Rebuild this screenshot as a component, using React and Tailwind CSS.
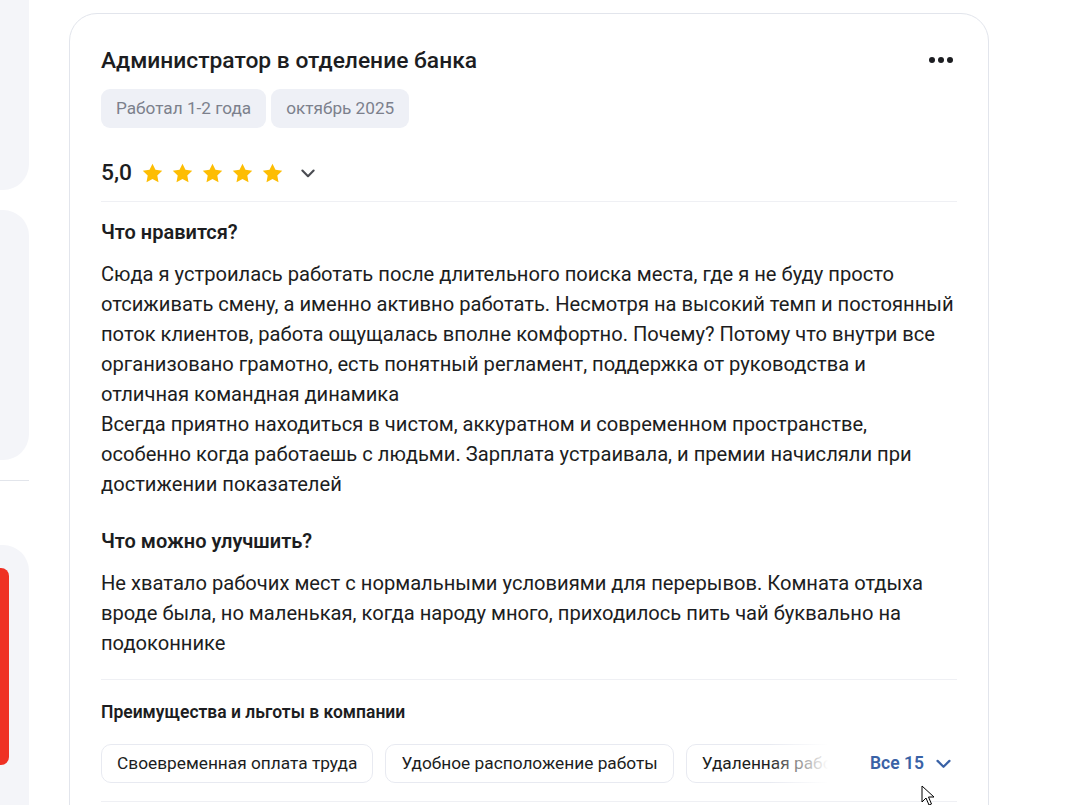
import React from 'react'

const FONT = { fontFamily: 'Roboto, "Noto Sans", sans-serif' }

function Star() {
  return (
    <svg width="21" height="20" viewBox="0 0 24 23" className="shrink-0">
      <path
        d="M12 0.8l3.4 7.1 7.8 1-5.7 5.4 1.4 7.7L12 18.3l-6.9 3.7 1.4-7.7L0.8 8.9l7.8-1z"
        fill="#fdbd03"
      />
    </svg>
  )
}

function Chevron({ color = '#4a4c52', size = 18 }) {
  return (
    <svg width={size} height={size} viewBox="0 0 16 16" fill="none">
      <path d="M3 5.8l5 5 5-5" stroke={color} strokeWidth="1.9" strokeLinecap="round" strokeLinejoin="round" />
    </svg>
  )
}

const benefits = ['Своевременная оплата труда', 'Удобное расположение работы', 'Удаленная работа']

export default function App() {
  return (
    <div className="relative flex h-[805px] w-[1076px] overflow-hidden bg-white text-[#1c1d21]" style={FONT}>
      {/* left column */}
      <div className="flex w-[29px] shrink-0 flex-col">
        <div className="h-[190px] rounded-br-[26px] bg-[#f4f5f9]" />
        <div className="mt-[20px] h-[250px] rounded-r-[26px] bg-[#f4f5f9]" />
        <div className="mt-[20px] h-px bg-[#e2e5eb]" />
        <div className="mt-[64px] flex-1 rounded-tr-[26px] bg-[#f4f5f9] pt-[23px]">
          <div className="h-[197px] w-[9px] rounded-r-[8px] bg-[#ef3124]" />
        </div>
      </div>

      {/* review card */}
      <div className="ml-[40px] mt-[13px] w-[920px] shrink-0 self-start rounded-[28px] border border-[#e2e5ec] px-[31px] pt-[33px]">
        <div className="flex items-start justify-between">
          <h2 className="text-[22.8px] font-medium leading-7">Администратор в отделение банка</h2>
          <div className="mr-[4px] mt-[10px] flex gap-[3px]">
            <span className="h-[6px] w-[6px] rounded-full bg-[#1c1d21]" />
            <span className="h-[6px] w-[6px] rounded-full bg-[#1c1d21]" />
            <span className="h-[6px] w-[6px] rounded-full bg-[#1c1d21]" />
          </div>
        </div>

        <div className="mt-[14px] flex gap-[5px]">
          <span className="flex h-[39px] items-center rounded-[9px] bg-[#eef0f6] px-[15px] text-[17.2px] text-[#7c808c]">Работал 1-2 года</span>
          <span className="flex h-[39px] items-center rounded-[9px] bg-[#eef0f6] px-[15px] text-[17.2px] text-[#7c808c]">октябрь 2025</span>
        </div>

        <div className="mt-[31px] flex items-center">
          <span className="text-[22.8px] font-medium leading-7">5,0</span>
          <div className="ml-[10px] flex gap-[9px]">
            <Star />
            <Star />
            <Star />
            <Star />
            <Star />
          </div>
          <span className="ml-[16px]">
            <Chevron />
          </span>
        </div>

        <div className="mt-[14px] h-px bg-[#eff0f4]" />

        <h3 className="mt-[16px] text-[20px] font-semibold leading-7">Что нравится?</h3>
        <p className="mt-[13px] text-[20.15px] leading-[30px]">
          Сюда я устроилась работать после длительного поиска места, где я не буду просто отсиживать смену, а именно активно работать. Несмотря на высокий темп и постоянный поток клиентов, работа ощущалась вполне комфортно. Почему? Потому что внутри все организовано грамотно, есть понятный регламент, поддержка от руководства и отличная командная динамика
          <br />
          Всегда приятно находиться в чистом, аккуратном и современном пространстве, особенно когда работаешь с людьми. Зарплата устраивала, и премии начисляли при достижении показателей
        </p>

        <h3 className="mt-[28px] text-[20px] font-semibold leading-7">Что можно улучшить?</h3>
        <p className="mt-[13px] text-[20.15px] leading-[30px]">
          Не хватало рабочих мест с нормальными условиями для перерывов. Комната отдыха вроде была, но маленькая, когда народу много, приходилось пить чай буквально на подоконнике
        </p>

        <div className="mt-[21px] h-px bg-[#eff0f4]" />

        <h4 className="mt-[20px] text-[17.5px] font-semibold leading-6">Преимущества и льготы в компании</h4>

        <div className="mt-[20px] flex items-center">
          <div className="relative flex flex-1 gap-[12px] overflow-hidden">
            {benefits.map(b => (
              <span
                key={b}
                className="flex h-[39px] shrink-0 items-center whitespace-nowrap rounded-[10px] border border-[#e8eaf1] px-[15px] text-[17.3px]"
              >
                {b}
              </span>
            ))}
            <div className="absolute inset-y-0 right-0 w-[60px] bg-gradient-to-r from-white/0 to-white" />
          </div>
          <button className="ml-[42px] mr-[4px] flex items-center gap-[10px] text-[17.5px] font-semibold text-[#3a62a6]">
            Все 15
            <Chevron color="#3a62a6" size={19} />
          </button>
        </div>

        <div className="mt-[18px] h-px bg-[#eff0f4]" />
        <div className="h-10" />
      </div>

      {/* mouse cursor */}
      <svg className="absolute left-[921px] top-[785px]" width="14" height="21" viewBox="0 0 14 21">
        <path d="M1 1v16l4-4 3 7 2.5-1-3-7h5.5z" fill="white" stroke="black" strokeWidth="1" strokeLinejoin="round" />
      </svg>
    </div>
  )
}
